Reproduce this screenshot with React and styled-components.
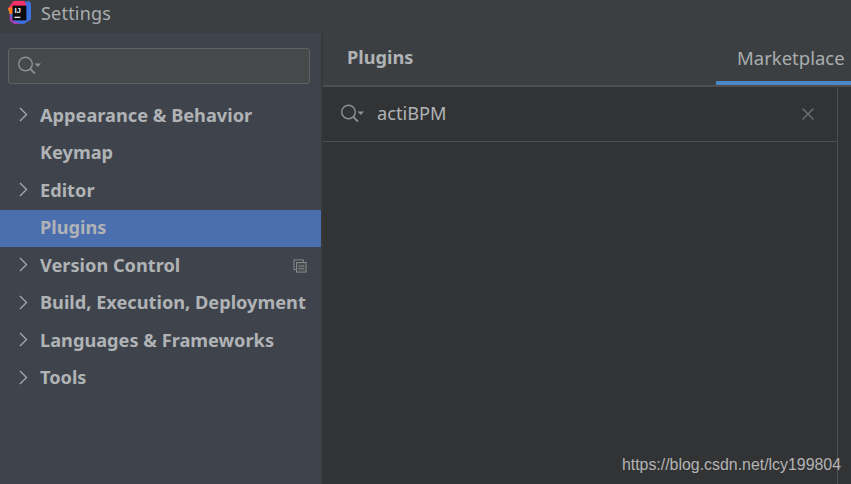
import React from "react";
import styled, { createGlobalStyle } from "styled-components";

const Global = createGlobalStyle`
  html, body { margin: 0; padding: 0; background: #3c3f41; }
  body { width: 851px; height: 484px; overflow: hidden; font-family: "Noto Sans", "Open Sans", sans-serif; }
`;
const Window = styled.div`
  position: relative; width: 851px; height: 484px; display: flex; flex-direction: column; overflow: hidden; background: #3c3f41;
`;
const TitleBar = styled.div`
  height: 33px; flex: none; display: flex; align-items: center; gap: 10px; padding-left: 7px; box-sizing: border-box; padding-bottom: 8px;
`;
const Title = styled.span`
  font-size: 18px; color: #a9adaf; letter-spacing: 0.2px;
`;
const Body = styled.div`
  flex: 1; display: flex; min-height: 0;
`;
const Sidebar = styled.nav`
  width: 321px; flex: none; background: #3e434c; padding-top: 15px; box-sizing: border-box;
`;
const Divider = styled.div`
  width: 2px; flex: none; background: #363839;
`;
const SideSearch = styled.div`
  margin: 0 11px 0 8px; height: 36px; box-sizing: border-box; border: 1px solid #5f6364; border-radius: 3px; background: #45494a; display: flex; align-items: center; padding-left: 8px;
`;
const Tree = styled.ul`
  list-style: none; margin: 13px 0 0; padding: 0;
`;
const Row = styled.li`
  height: 37.5px; display: flex; align-items: center; padding: 0 14px 0 18px; background: ${p => (p.$selected ? "#4b6eaf" : "transparent")};
`;
const Arrow = styled.span`
  width: 22px; flex: none; display: flex; align-items: center; color: #a4a7a9; padding: 0 0 2px 1px; box-sizing: border-box;
`;
const Label = styled.span`
  flex: 1; font-size: 18.2px; font-weight: 700; color: #b0b3b5; white-space: nowrap; line-height: 1; padding-bottom: 2px;
`;
const Main = styled.main`
  flex: 1; display: flex; flex-direction: column; min-width: 0;
`;
const Header = styled.header`
  height: 54px; flex: none; display: flex; justify-content: space-between; align-items: stretch; box-sizing: border-box; border-bottom: 2px solid #4d4f51; padding-left: 24px;
`;
const HeaderTitle = styled.h1`
  margin: 0; font-size: 18.2px; font-weight: 700; color: #b0b3b5; align-self: center; line-height: 1; padding-bottom: 3px;
`;
const Tab = styled.div`
  width: 135px; box-sizing: border-box; border-bottom: 4px solid #4a88c7; padding: 14px 0 0 21px; font-size: 18.5px; line-height: 22px; color: #a9adaf; white-space: nowrap; overflow: hidden;
`;
const Content = styled.div`
  flex: 1; display: flex; min-height: 0; background: #323335;
`;
const Left = styled.section`
  width: 515px; flex: none; box-sizing: border-box; border-right: 1px solid #4d4f51;
`;
const SearchRow = styled.div`
  height: 55px; box-sizing: border-box; border-bottom: 1px solid #4d4f51; display: flex; align-items: center; padding: 0 22px 0 17px; gap: 11px;
`;
const Query = styled.span`
  flex: 1; font-size: 18.2px; color: #b0b3b5; line-height: 1; padding-bottom: 2px;
`;
const Watermark = styled.span`
  position: absolute; right: 10px; top: 456px; font-family: "Liberation Sans", Arial, sans-serif; font-size: 15.9px; line-height: 18px; color: #b4b4b4; white-space: nowrap;
`;

const Logo = () => (
  <svg width="24" height="24" viewBox="0 0 26 26">
    <polygon points="1,8 8,0 19,1 24,0 26,3 26,20 18,25 9,24 4,22 3,13" fill="#3d71e0" />
    <polygon points="1,8 7,0 19,0 21,5 6,13" fill="#f4306b" />
    <polygon points="3,13 7,22 15,25 8,25 3,21" fill="#b13bb8" />
    <polygon points="1,8 6,6 6,14 3,14" fill="#f97a12" />
    <rect x="6" y="5" width="15" height="16" fill="#0b0b0d" />
    <text x="8" y="13" fontFamily="Liberation Sans" fontWeight="700" fontSize="8.5" fill="#f2f2f2">IJ</text>
    <rect x="8" y="17" width="6.5" height="1.4" fill="#e8e8e8" />
  </svg>
);
const SearchIcon = () => (
  <svg width="26" height="20" viewBox="0 0 26 20" fill="none">
    <circle cx="8.5" cy="8" r="6.8" stroke="#8e9193" strokeWidth="1.4" />
    <path d="M13.4 13 18 17.6" stroke="#8e9193" strokeWidth="1.8" />
    <path d="M17.5 7.5h6.5l-3.2 3.6z" fill="#8e9193" />
  </svg>
);
const Chevron = () => (
  <svg width="10" height="15" viewBox="0 0 10 15" fill="none">
    <path d="M1 1 7.5 7.5 1 14" stroke="#a4a7a9" strokeWidth="1.4" />
  </svg>
);
const ProjectIcon = () => (
  <svg width="14" height="14" viewBox="0 0 14 14" fill="none" stroke="#868a8c" strokeWidth="1">
    <path d="M3.5 10.5H.9V.9h9.6v2.6" />
    <rect x="3.5" y="3.5" width="9.6" height="9.6" fill="#4a4d50" />
    <path d="M5.5 7h5.6M5.5 9.8h5.6" />
  </svg>
);
const Close = () => (
  <svg width="14" height="14" viewBox="0 0 14 14" fill="none">
    <path d="M1.5 1.5 12.5 12.5M12.5 1.5 1.5 12.5" stroke="#6e7173" strokeWidth="1.4" />
  </svg>
);

const items = [
  { label: "Appearance & Behavior", arrow: true },
  { label: "Keymap" },
  { label: "Editor", arrow: true },
  { label: "Plugins", selected: true },
  { label: "Version Control", arrow: true, project: true },
  { label: "Build, Execution, Deployment", arrow: true },
  { label: "Languages & Frameworks", arrow: true },
  { label: "Tools", arrow: true },
];

export default function App() {
  return (
    <Window>
      <Global />
      <TitleBar>
        <Logo />
        <Title>Settings</Title>
      </TitleBar>
      <Body>
        <Sidebar>
          <SideSearch><SearchIcon /></SideSearch>
          <Tree>
            {items.map(it => (
              <Row key={it.label} $selected={it.selected}>
                <Arrow>{it.arrow && <Chevron />}</Arrow>
                <Label>{it.label}</Label>
                {it.project && <ProjectIcon />}
              </Row>
            ))}
          </Tree>
        </Sidebar>
        <Divider />
        <Main>
          <Header>
            <HeaderTitle>Plugins</HeaderTitle>
            <Tab>Marketplace</Tab>
          </Header>
          <Content>
            <Left>
              <SearchRow>
                <SearchIcon />
                <Query>actiBPM</Query>
                <Close />
              </SearchRow>
            </Left>
          </Content>
        </Main>
      </Body>
      <Watermark>https://blog.csdn.net/lcy199804</Watermark>
    </Window>
  );
}
